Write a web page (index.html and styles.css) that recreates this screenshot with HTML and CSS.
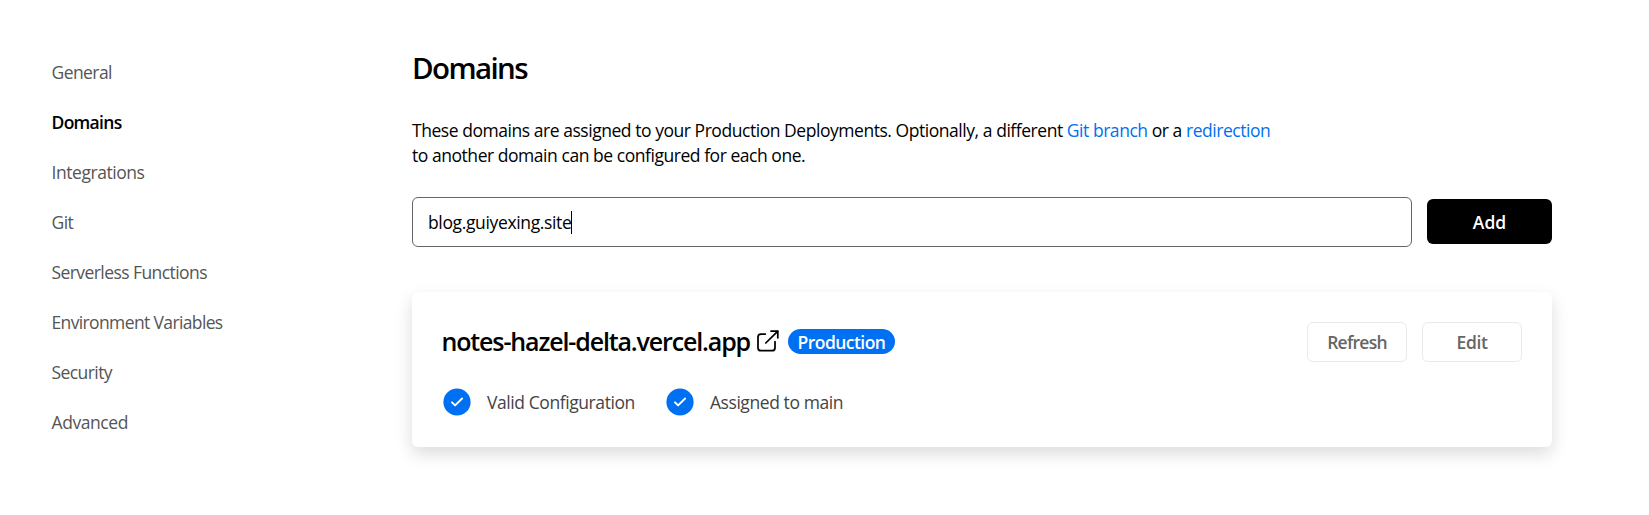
FILE: index.html
```
<!DOCTYPE html>
<html lang="en">
<head>
<meta charset="utf-8">
<title>Domains</title>
<link rel="stylesheet" href="styles.css">
</head>
<body>
<div class="page">
  <nav class="sidebar">
    <a class="link">General</a>
    <a class="link active">Domains</a>
    <a class="link integrations">Integrations</a>
    <a class="link">Git</a>
    <a class="link">Serverless Functions</a>
    <a class="link env">Environment Variables</a>
    <a class="link">Security</a>
    <a class="link advanced">Advanced</a>
  </nav>
  <main class="content">
    <h1 class="heading">Domains</h1>
    <p class="intro">These domains are assigned to your Production Deployments. Optionally, a different <a class="blue">Git branch</a> or a <a class="blue">redirection</a><br>to another domain can be configured for each one.</p>
    <div class="add-row">
      <div class="field"><span class="value">blog.guiyexing.site</span><span class="caret"></span></div>
      <button class="add">Add</button>
    </div>
    <section class="card">
      <div class="card-head">
        <h2 class="domain">notes-hazel-delta.vercel.app</h2>
        <svg class="external" width="22" height="22" viewBox="0 0 22 22" fill="none" stroke="#000" stroke-width="1.75" stroke-linecap="round" stroke-linejoin="round"><path d="M18 11.7V17.7a3 3 0 0 1-3 3H4a3 3 0 0 1-3-3V7a3 3 0 0 1 3-3H8.3"/><path d="M14 1.1H20.8V7.8"/><path d="M8.8 13L20.6 1.3"/></svg>
        <span class="badge">Production</span>
        <div class="actions">
          <button class="btn">Refresh</button>
          <button class="btn edit">Edit</button>
        </div>
      </div>
      <div class="statuses">
        <div class="status">
          <svg width="30" height="30" viewBox="0 0 30 30"><circle cx="15" cy="15" r="13.6" fill="#0070f3"/><path d="M10 15.3L13.1 18.4L20.1 11.5" fill="none" stroke="#fff" stroke-width="1.9" stroke-linecap="round" stroke-linejoin="round"/></svg>
          <span>Valid Configuration</span>
        </div>
        <div class="status">
          <svg width="30" height="30" viewBox="0 0 30 30"><circle cx="15" cy="15" r="13.6" fill="#0070f3"/><path d="M10 15.3L13.1 18.4L20.1 11.5" fill="none" stroke="#fff" stroke-width="1.9" stroke-linecap="round" stroke-linejoin="round"/></svg>
          <span>Assigned to main</span>
        </div>
      </div>
    </section>
  </main>
</div>
</body>
</html>
```
FILE: styles.css
```
* { box-sizing: border-box; }
body {
  margin: 0;
  background: #fff;
  color: #000;
  font: 400 17.5px/25px "Open Sans", "Noto Sans", sans-serif;
  letter-spacing: -0.455px;
}
.page { display: flex; height: 515px; overflow: hidden; }
.sidebar {
  display: flex;
  flex-direction: column;
  gap: 25px;
  width: 412px;
  padding: 60px 0 0 51.5px;
}
.link { color: #555; letter-spacing: -0.57px; white-space: nowrap; }
.active { color: #000; font-weight: 600; letter-spacing: -0.7px; }
.integrations { letter-spacing: -0.45px; }
.env { letter-spacing: -0.63px; }
.advanced { letter-spacing: -0.42px; }
.content { width: 1140px; padding-top: 48px; }
.heading {
  margin: 0;
  font-size: 29.5px;
  line-height: 40px;
  font-weight: 600;
  letter-spacing: -1.6px;
}
.intro { margin: 30px 0 0; white-space: nowrap; }
.blue { color: #0070f3; }
.add-row { display: flex; align-items: flex-start; gap: 15px; margin-top: 29px; }
.field {
  display: flex;
  align-items: center;
  flex: 1;
  height: 50px;
  padding: 0 15px;
  border: 1px solid #666;
  border-radius: 6px;
  letter-spacing: -0.36px;
}
.caret { width: 1px; height: 23px; background: #000; }
button { font: inherit; padding: 0; border-radius: 6px; }
.add {
  width: 125px;
  height: 45px;
  margin-top: 2px;
  padding-top: 1px;
  border: 0;
  background: #000;
  color: #fff;
  font-weight: 600;
}
.card {
  height: 155px;
  margin-top: 45px;
  padding: 30px;
  border-radius: 6px;
  background: #fff;
  box-shadow: 0 7px 17px rgba(0, 0, 0, 0.14);
}
.card-head { display: flex; align-items: center; height: 40px; }
.domain {
  width: 315px;
  margin: 0 0 0 -0.5px;
  padding-bottom: 1px;
  font-size: 25px;
  line-height: 39px;
  font-weight: 600;
  letter-spacing: -1.14px;
  white-space: nowrap;
}
.external { margin-bottom: 3px; }
.badge {
  width: 107px;
  height: 25px;
  margin: 0 0 2px 9.5px;
  border-radius: 13px;
  background: #0070f3;
  color: #fff;
  font-weight: 600;
  line-height: 27px;
  letter-spacing: -0.55px;
  text-align: center;
}
.actions { display: flex; gap: 15px; margin-left: auto; }
.btn {
  width: 100px;
  height: 40px;
  border: 1px solid #eaeaea;
  background: #fff;
  color: #666;
  font-weight: 600;
  letter-spacing: -0.75px;
}
.edit { letter-spacing: -0.4px; }
.statuses { display: flex; gap: 30px; margin-top: 25px; }
.status {
  display: flex;
  align-items: center;
  gap: 15px;
  height: 30px;
  color: #444;
  letter-spacing: -0.42px;
}
```
